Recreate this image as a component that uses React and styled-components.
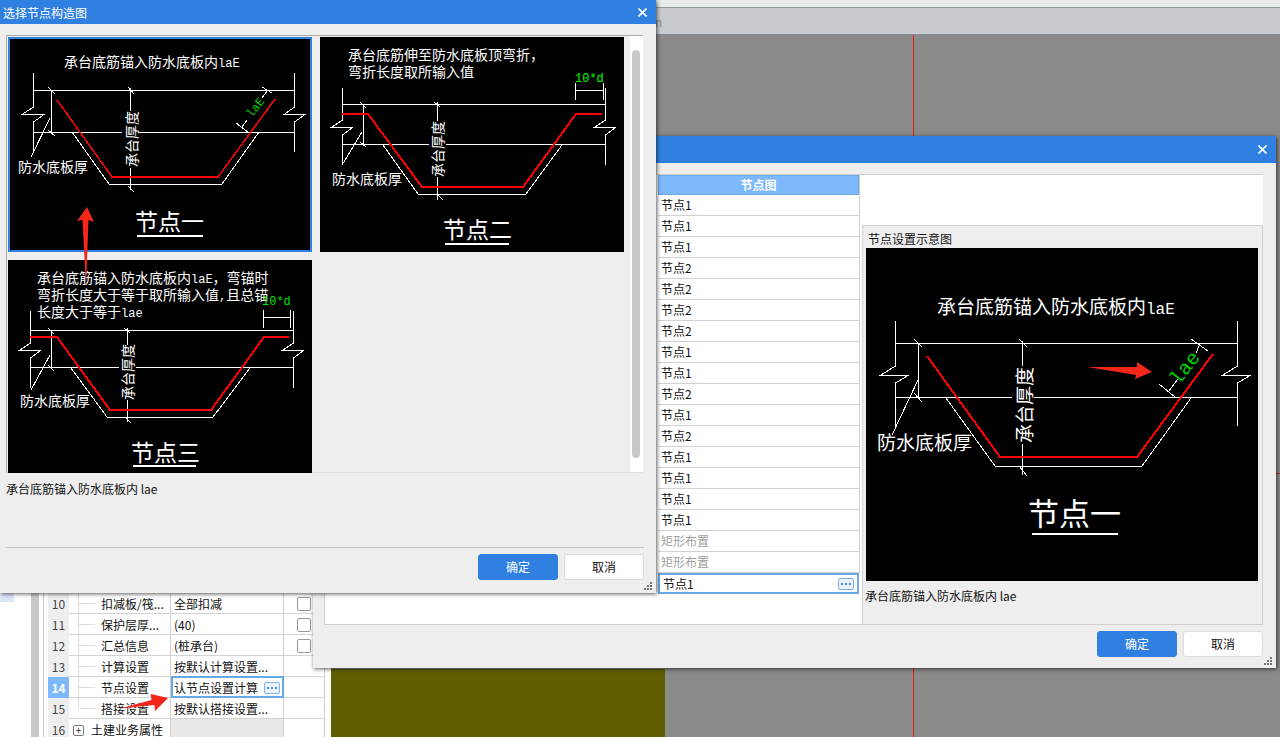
import React from 'react'
import styled, { createGlobalStyle } from 'styled-components'

const GlobalStyle = createGlobalStyle`
  html, body {
    margin: 0;
    padding: 0;
    background: #8a8a8a;
  }
  body {
    font-family: "Noto Sans CJK SC", "Noto Sans", sans-serif;
    font-size: 12px;
    color: #111;
  }
`

const Root = styled.div`
  position: relative;
  width: 1280px;
  height: 737px;
  overflow: hidden;
  display: flex;
  flex-direction: column;
`

const TopStrip = styled.div`
  height: 7px;
  background: #e9eced;
  border-bottom: 1px solid #8f9a9a;
`

const Toolbar = styled.div`
  height: 26px;
  background: #c8cbd0;
  border-bottom: 1px solid #8a8a98;
  padding-left: 640px;
  line-height: 28px;
  color: #858a94;
`

const Main = styled.div`
  flex: 1;
  display: flex;
  min-height: 0;
`

const LeftPanel = styled.div`
  width: 331px;
  flex: none;
  background: #fff;
  display: flex;
  padding-top: 558px;
  box-sizing: border-box;
`

const SideList = styled.div`
  width: 31px;
  flex: none;
`

const SideChip = styled.div`
  width: 14px;
  height: 9px;
  background: #dbe6f5;
`

const SideScroll = styled.div`
  width: 8px;
  flex: none;
  background: #c8c8c8;
`

const TableWrap = styled.div`
  margin-left: 4px;
  padding-left: 4px;
  width: 277px;
  flex: none;
  border-left: 1px solid #c9c9c9;
`

const PropRow = styled.div`
  display: grid;
  grid-template-columns: 21px 102px 113px 41px;
  height: 21px;
  box-sizing: border-box;
  border-bottom: 1px solid #d2d2d2;
  border-right: 1px solid #d2d2d2;
  line-height: 22px;
`

const NumCell = styled.div`
  text-align: center;
  background: ${({ $active }) => ($active ? '#7db8fb' : '#eeeeee')};
  color: ${({ $active }) => ($active ? '#fff' : '#444')};
  font-weight: ${({ $active }) => ($active ? 700 : 400)};
  font-size: 12px;
`

const NameCell = styled.div`
  position: relative;
  padding-left: 32px;
  border-right: 1px solid #d2d2d2;
  white-space: nowrap;

  &::before {
    content: '';
    position: absolute;
    left: 10px;
    top: 10px;
    width: 16px;
    height: 1px;
    background: #dcdcdc;
  }
  &::after {
    content: '';
    position: absolute;
    left: 9px;
    top: -1px;
    width: 1px;
    height: ${({ $last }) => ($last ? '11px' : '22px')};
    background: #dcdcdc;
  }
`

const GroupCell = styled.div`
  display: flex;
  align-items: center;
  gap: 7px;
  padding-left: 4px;
  border-right: 1px solid #d2d2d2;
  white-space: nowrap;
`

const PlusBox = styled.span`
  width: 11px;
  height: 11px;
  flex: none;
  box-sizing: border-box;
  border: 1px solid #777;
  border-radius: 2px;
  display: flex;
  align-items: center;
  justify-content: center;
  line-height: 1;
  font-size: 10px;
  color: #222;
`

const ValueCell = styled.div`
  padding-left: 3px;
  border-right: 1px solid #d2d2d2;
  white-space: nowrap;
  overflow: hidden;
  background: ${({ $muted }) => ($muted ? '#e8e8e8' : 'transparent')};
`

const ActiveValue = styled.div`
  display: flex;
  align-items: center;
  justify-content: space-between;
  padding: 1px 2px 0 1px;
  margin-top: -1px;
  height: 22px;
  box-sizing: border-box;
  border: 2px solid #66a9e8;
  background: #fff;
  white-space: nowrap;
`

const CheckCell = styled.div`
  display: flex;
  align-items: center;
  padding-left: 13px;
`

const CheckBox = styled.span`
  width: 14px;
  height: 14px;
  box-sizing: border-box;
  border: 1px solid #999;
  border-radius: 2px;
  background: #fff;
`

const DotsButton = styled.span`
  width: 16px;
  height: 12px;
  flex: none;
  box-sizing: border-box;
  border: 1px solid #7db0e8;
  border-radius: 2px;
  background: #eaf3fd;
  display: flex;
  align-items: center;
  justify-content: center;
  gap: 2px;

  i {
    width: 2px;
    height: 2px;
    background: #4a90e2;
  }
`

const Canvas = styled.div`
  position: relative;
  flex: 1;
  background: #8a8a8a;
`

const OliveBlock = styled.div`
  position: absolute;
  left: 0;
  bottom: 0;
  width: 334px;
  height: 68px;
  background: #5f5f00;
`

const AxisV = styled.div`
  position: absolute;
  left: 582px;
  top: 0;
  bottom: 0;
  width: 1px;
  background: #e8201c;
`

const AxisH = styled.div`
  position: absolute;
  left: 0;
  right: 0;
  top: 438px;
  height: 1px;
  background: #e8201c;
`

const Dialog = styled.div`
  position: absolute;
  left: ${({ $x }) => $x}px;
  top: ${({ $y }) => $y}px;
  width: ${({ $w }) => $w}px;
  height: ${({ $h }) => $h}px;
  background: #eeeeee;
  box-shadow: 1px 1px 4px rgba(0, 0, 0, 0.65);
  display: flex;
  flex-direction: column;
`

const TitleBar = styled.div`
  height: ${({ $h }) => $h}px;
  flex: none;
  background: #2f80e0;
  color: #fff;
  display: flex;
  align-items: center;
  justify-content: space-between;
  padding: 0 9px 0 3px;
`

const CloseIcon = styled.svg`
  width: 9px;
  height: 9px;
  display: block;
  stroke: #fff;
  stroke-width: 1.6;
`

const ScrollArea = styled.div`
  display: flex;
  height: 438px;
  margin: 11px 13px 0 6px;
  border-top: 1px solid #a8a8a8;
  border-left: 1px solid #a8a8a8;
  border-bottom: 1px solid #e0e0e0;
  box-sizing: border-box;
`

const ThumbGrid = styled.div`
  flex: 1;
  display: grid;
  grid-template-columns: 304px 304px;
  grid-template-rows: 215px 213px;
  gap: 8px;
  padding: 1px 0 0 1px;
`

const Thumb = styled.div`
  box-sizing: border-box;
  border: ${({ $selected }) => ($selected ? '2px solid #2f80e0' : 'none')};
  background: #000;
  overflow: hidden;
`

const ScrollTrack = styled.div`
  width: 13px;
  flex: none;
  background: #fff;
  padding: 14px 3px 0 2px;
  box-sizing: border-box;
`

const ScrollThumb = styled.div`
  height: 408px;
  border-radius: 4px;
  background: #c8c8c8;
`

const Caption = styled.div`
  margin: ${({ $m }) => $m};
  line-height: 16px;
`

const Rule = styled.div`
  height: 1px;
  margin: 50px 12px 0 6px;
  background: #c8c8c8;
`

const Footer = styled.div`
  display: flex;
  justify-content: flex-end;
  gap: 6px;
  padding: ${({ $p }) => $p};
`

const Button = styled.div`
  width: 80px;
  height: 26px;
  box-sizing: border-box;
  border-radius: 3px;
  text-align: center;
  line-height: 24px;
  background: ${({ $primary }) => ($primary ? '#2f80e0' : '#fff')};
  color: ${({ $primary }) => ($primary ? '#fff' : '#111')};
  border: 1px solid ${({ $primary }) => ($primary ? '#2f80e0' : '#dcdcdc')};
`

const Grip = styled.svg`
  position: absolute;
  right: 4px;
  bottom: 3px;
  width: 8px;
  height: 8px;
  fill: #777;
`

const Content = styled.div`
  display: flex;
  height: 451px;
  margin: 11px 13px 0 11px;
  border-top: 1px solid #cfcfcf;
  border-bottom: 1px solid #cfcfcf;
  border-left: 1px solid #cfcfcf;
  background: #fff;
  box-sizing: border-box;
`

const HiddenColumn = styled.div`
  width: 333px;
  flex: none;
`

const NodeColumn = styled.div`
  width: 201px;
  flex: none;
  border-right: 1px solid #d2d2d2;
  margin-right: 2px;
  height: 398px;
`

const NodeHeader = styled.div`
  height: 20px;
  box-sizing: border-box;
  background: #7db8fb;
  border: 1px solid #6aa9ec;
  color: #fff;
  font-weight: 700;
  text-align: center;
  line-height: 18px;
`

const NodeRow = styled.div`
  height: 21px;
  box-sizing: border-box;
  border-bottom: 1px solid #d2d2d2;
  padding-left: 3px;
  line-height: 20px;
  color: ${({ $muted }) => ($muted ? '#a0a0a0' : '#111')};
`

const NodeRowActive = styled.div`
  height: 21px;
  box-sizing: border-box;
  border: 2px solid #66a9e8;
  padding: 0 3px;
  display: flex;
  align-items: center;
  justify-content: space-between;
`

const RightColumn = styled.div`
  flex: 1;
  padding-top: 50px;
  display: flex;
  min-width: 0;
`

const GroupPanel = styled.div`
  flex: 1;
  background: #eeeeee;
  border: 1px solid #d2d2d2;
  border-bottom: none;
  padding: 5px 4px 0 3px;
`

const GroupLabel = styled.div`
  padding-left: 2px;
  height: 17px;
  line-height: 15px;
`

const BigPicture = styled.div`
  width: 392px;
  height: 333px;
  background: #000;
`

const Drawing = styled.svg`
  display: block;
  width: 100%;
  height: 100%;
  fill: none;
`

const WhiteLines = styled.path`
  stroke: #fff;
  stroke-width: 1;
  shape-rendering: crispEdges;
`

const RedLine = styled.path`
  stroke: #f00;
  stroke-width: ${({ $w }) => $w}px;
  shape-rendering: crispEdges;
`

const DrawText = styled.text`
  font-family: "Noto Sans CJK SC", sans-serif;
  font-size: ${({ $size }) => $size}px;
  fill: ${({ $fill }) => $fill || '#fff'};
`

const Latin = styled.tspan`
  font-family: "Liberation Mono", monospace;
  font-size: ${({ $size }) => $size}px;
`

const Underline = styled.rect`
  fill: #fff;
`

const ArrowFill = styled.polygon`
  fill: #f5261a;
`

const Overlay = styled.svg`
  position: absolute;
  left: 0;
  top: 0;
  width: 1280px;
  height: 737px;
  pointer-events: none;
`

const nodeOne = {
  view: '10 39 300 211',
  white: [
    'M33.5 73V107L22 114.5H44L33.5 122V153',
    'M294.5 73V107L284 114.5H305L294.5 122V152',
    'M33 90.5H294',
    'M33 132.5H122M139 132.5H294',
    'M72 132L109 184H222L259 132',
    'M51.5 90V133M48 87L55 94M48 130L55 136',
    'M50 118L31 157',
    'M130.5 88V111M130.5 168V190M128 87L134 94M128 186L134 192',
    'M262 87L272 93M236 123L248 132M242 127L247 120M262 98L267 91',
  ],
  red: 'M57 100L112 177H218L275 99',
  redWidth: 1.5,
  texts: [
    { x: 64, y: 67, size: 14, text: '承台底筋锚入防水底板内', latin: 'laE' },
    { x: 18, y: 172, size: 14, text: '防水底板厚' },
  ],
  depth: { x: 131, y: 139, size: 14 },
  green: { x: 256, y: 108, size: 12, angle: -52, text: 'laE', fill: '#00d000' },
  title: { x: 135, y: 230, size: 23, text: '节点一', lineX: 137, lineY: 235, lineW: 66 },
}

const nodeTwo = {
  view: '320 37 304 215',
  white: [
    'M342.5 88V120L332 127H353L342.5 135V165',
    'M605.5 88V120L595 127H616L605.5 135V165',
    'M342 104.5H605',
    'M342 144.5H429M446 144.5H605',
    'M383 145L418 194H526L562 145',
    'M363 104V145M360 102L366 108M360 142L366 147',
    'M362 132L342 165',
    'M437 102V121M437 177V200M434 102L440 107M438 195L443 200',
    'M575.5 83V100M603.5 83V100M575 90.5H603',
  ],
  red: 'M342 114H368L422 187H523L576 114H602',
  redWidth: 2,
  texts: [
    { x: 348, y: 60, size: 14, text: '承台底筋伸至防水底板顶弯折\uFF0C' },
    { x: 348, y: 77, size: 14, text: '弯折长度取所输入值' },
    { x: 332, y: 184, size: 14, text: '防水底板厚' },
    { x: 575, y: 82, size: 14, latin: '10*d', fill: '#00ff00' },
  ],
  depth: { x: 437, y: 149, size: 14 },
  title: { x: 443, y: 238, size: 23, text: '节点二', lineX: 445, lineY: 243, lineW: 64 },
}

const nodeThree = {
  view: '8 260 304 213',
  white: [
    'M30.5 311V343L20 350H41L30.5 358V388',
    'M293.5 311V343L283 350H304L293.5 358V388',
    'M30 330.5H293',
    'M30 367.5H119M136 367.5H293',
    'M71 368L107 417H213L250 368',
    'M51 330V368M48 328L54 334M48 365L54 371',
    'M50 355L31 390',
    'M127 328V345M127 400V422M124 328L130 333M125 417L131 423',
    'M263.5 310V328M290.5 310V328M263 317.5H290',
  ],
  red: 'M30 337H57L110 410H211L264 337H289',
  redWidth: 2,
  texts: [
    { x: 37, y: 283, size: 14, text: '承台底筋锚入防水底板内', latin: 'laE', after: '\uFF0C弯锚时' },
    { x: 37, y: 300, size: 14, text: '弯折长度大于等于取所输入值', latin: ',', after: '且总锚' },
    { x: 37, y: 317, size: 14, text: '长度大于等于', latin: 'lae' },
    { x: 20, y: 406, size: 14, text: '防水底板厚' },
    { x: 262, y: 305, size: 14, latin: '10*d', fill: '#00e000' },
  ],
  depth: { x: 127, y: 372, size: 14 },
  title: { x: 131, y: 461, size: 23, text: '节点三', lineX: 133, lineY: 465, lineW: 63 },
}

const nodeBig = {
  view: '866 248 392 333',
  white: [
    'M895.5 321V366L881 375H909L895.5 383V426',
    'M1237.5 321V366L1223 375H1251L1237.5 383V426',
    'M895 343.5H1237',
    'M895 397.5H1012M1034 397.5H1237',
    'M946 398L995 466H1142L1191 398',
    'M918.5 343V398M914 339L922 347M914 393L922 402',
    'M918 380L892 435',
    'M1022.5 341V366M1022.5 444V475M1019 339L1027 347M1019 466L1027 476',
    'M1191 339L1208 351M1159 384L1175 397M1169 391L1178 379M1196 353L1199 346',
  ],
  red: 'M927 356L1000 457H1137L1213 354',
  redWidth: 2,
  texts: [
    { x: 937, y: 314, size: 19, text: '承台底筋锚入防水底板内', latin: 'laE' },
    { x: 877, y: 450, size: 19, text: '防水底板厚' },
  ],
  depth: { x: 1023, y: 405, size: 19 },
  green: { x: 1185, y: 368, size: 20, angle: -52, text: 'lae', fill: '#00d000' },
  title: { x: 1028, y: 525, size: 31, text: '节点一', lineX: 1032, lineY: 533, lineW: 86 },
  arrow: '1087,367 1137,367 1137,362 1152,372 1135,379 1136,375',
}

const Schematic = ({ node }) => {
  const { title, depth, green } = node
  return (
    <Drawing viewBox={node.view}>
      <WhiteLines d={node.white.join('')} />
      <RedLine d={node.red} $w={node.redWidth} />
      {node.texts.map(({ x, y, size, text, latin, after, fill }) => (
        <DrawText key={`${x}-${y}`} x={x} y={y} $size={size} $fill={fill}>
          {text}
          {latin && <Latin $size={Math.round(size * 0.86)}>{latin}</Latin>}
          {after}
        </DrawText>
      ))}
      <DrawText
        x={depth.x}
        y={depth.y}
        $size={depth.size}
        textAnchor="middle"
        dominantBaseline="central"
        transform={`rotate(-90 ${depth.x} ${depth.y})`}
      >
        承台厚度
      </DrawText>
      {green && (
        <DrawText
          x={green.x}
          y={green.y}
          $fill={green.fill}
          textAnchor="middle"
          dominantBaseline="central"
          transform={`rotate(${green.angle} ${green.x} ${green.y})`}
        >
          <Latin $size={green.size}>{green.text}</Latin>
        </DrawText>
      )}
      <DrawText x={title.x} y={title.y} $size={title.size}>
        {title.text}
      </DrawText>
      <Underline x={title.lineX} y={title.lineY} width={title.lineW} height={2} />
      {node.arrow && <ArrowFill points={node.arrow} />}
    </Drawing>
  )
}

const Close = () => (
  <CloseIcon viewBox="0 0 9 9">
    <path d="M0.5 0.5L8.5 8.5M8.5 0.5L0.5 8.5" />
  </CloseIcon>
)

const GripDots = () => (
  <Grip viewBox="0 0 8 8">
    <rect x="6" y="0" width="2" height="2" />
    <rect x="3" y="3" width="2" height="2" />
    <rect x="6" y="3" width="2" height="2" />
    <rect x="0" y="6" width="2" height="2" />
    <rect x="3" y="6" width="2" height="2" />
    <rect x="6" y="6" width="2" height="2" />
  </Grip>
)

const Dots = () => (
  <DotsButton>
    <i />
    <i />
    <i />
  </DotsButton>
)

const propRows = [
  { no: 10, name: '扣减板/筏...', value: '全部扣减', check: true },
  { no: 11, name: '保护层厚...', value: '(40)', check: true },
  { no: 12, name: '汇总信息', value: '(桩承台)', check: true },
  { no: 13, name: '计算设置', value: '按默认计算设置...' },
  { no: 14, name: '节点设置', value: '认节点设置计算', active: true },
  { no: 15, name: '搭接设置', value: '按默认搭接设置...', last: true },
]

const nodeRows = [
  '节点1', '节点1', '节点1', '节点2', '节点2', '节点2', '节点2', '节点1', '节点1',
  '节点2', '节点1', '节点2', '节点1', '节点1', '节点1', '节点1', '矩形布置', '矩形布置',
]

const PropertyTable = () => (
  <TableWrap>
    {propRows.map(({ no, name, value, check, active, last }) => (
      <PropRow key={no}>
        <NumCell $active={active}>{no}</NumCell>
        <NameCell $last={last}>{name}</NameCell>
        {active ? (
          <ActiveValue>
            {value}
            <Dots />
          </ActiveValue>
        ) : (
          <ValueCell>{value}</ValueCell>
        )}
        <CheckCell>{check && <CheckBox />}</CheckCell>
      </PropRow>
    ))}
    <PropRow>
      <NumCell>16</NumCell>
      <GroupCell>
        <PlusBox>+</PlusBox>
        土建业务属性
      </GroupCell>
      <ValueCell $muted />
      <CheckCell />
    </PropRow>
  </TableWrap>
)

const App = () => (
  <Root>
    <GlobalStyle />
    <TopStrip />
    <Toolbar>mm</Toolbar>
    <Main>
      <LeftPanel>
        <SideList>
          <SideChip />
        </SideList>
        <SideScroll />
        <PropertyTable />
      </LeftPanel>
      <Canvas>
        <OliveBlock />
        <AxisV />
        <AxisH />
      </Canvas>
    </Main>

    <Dialog $x={313} $y={136} $w={963} $h={532}>
      <TitleBar $h={27}>
        <span />
        <Close />
      </TitleBar>
      <Content>
        <HiddenColumn />
        <NodeColumn>
          <NodeHeader>节点图</NodeHeader>
          {nodeRows.map((label, i) => (
            <NodeRow key={i} $muted={label === '矩形布置'}>
              {label}
            </NodeRow>
          ))}
          <NodeRowActive>
            节点1
            <Dots />
          </NodeRowActive>
        </NodeColumn>
        <RightColumn>
          <GroupPanel>
            <GroupLabel>节点设置示意图</GroupLabel>
            <BigPicture>
              <Schematic node={nodeBig} />
            </BigPicture>
            <Caption $m="7px 0 0 -1px">承台底筋锚入防水底板内 lae</Caption>
          </GroupPanel>
        </RightColumn>
      </Content>
      <Footer $p="6px 13px 0 0">
        <Button $primary>确定</Button>
        <Button>取消</Button>
      </Footer>
      <GripDots />
    </Dialog>

    <Dialog $x={0} $y={0} $w={656} $h={593}>
      <TitleBar $h={24}>
        <span>选择节点构造图</span>
        <Close />
      </TitleBar>
      <ScrollArea>
        <ThumbGrid>
          <Thumb $selected>
            <Schematic node={nodeOne} />
          </Thumb>
          <Thumb>
            <Schematic node={nodeTwo} />
          </Thumb>
          <Thumb>
            <Schematic node={nodeThree} />
          </Thumb>
        </ThumbGrid>
        <ScrollTrack>
          <ScrollThumb />
        </ScrollTrack>
      </ScrollArea>
      <Caption $m="8px 0 0 6px">承台底筋锚入防水底板内 lae</Caption>
      <Rule />
      <Footer $p="6px 12px 0 0">
        <Button $primary>确定</Button>
        <Button>取消</Button>
      </Footer>
      <GripDots />
    </Dialog>

    <Overlay viewBox="0 0 1280 737">
      <ArrowFill points="87,207 94,222 88.5,220 86,287 82.5,220 77,221" />
      <ArrowFill points="120,708.5 151.5,700 150.7,694 168,698 155,711 154.5,705" />
    </Overlay>
  </Root>
)

export default App
